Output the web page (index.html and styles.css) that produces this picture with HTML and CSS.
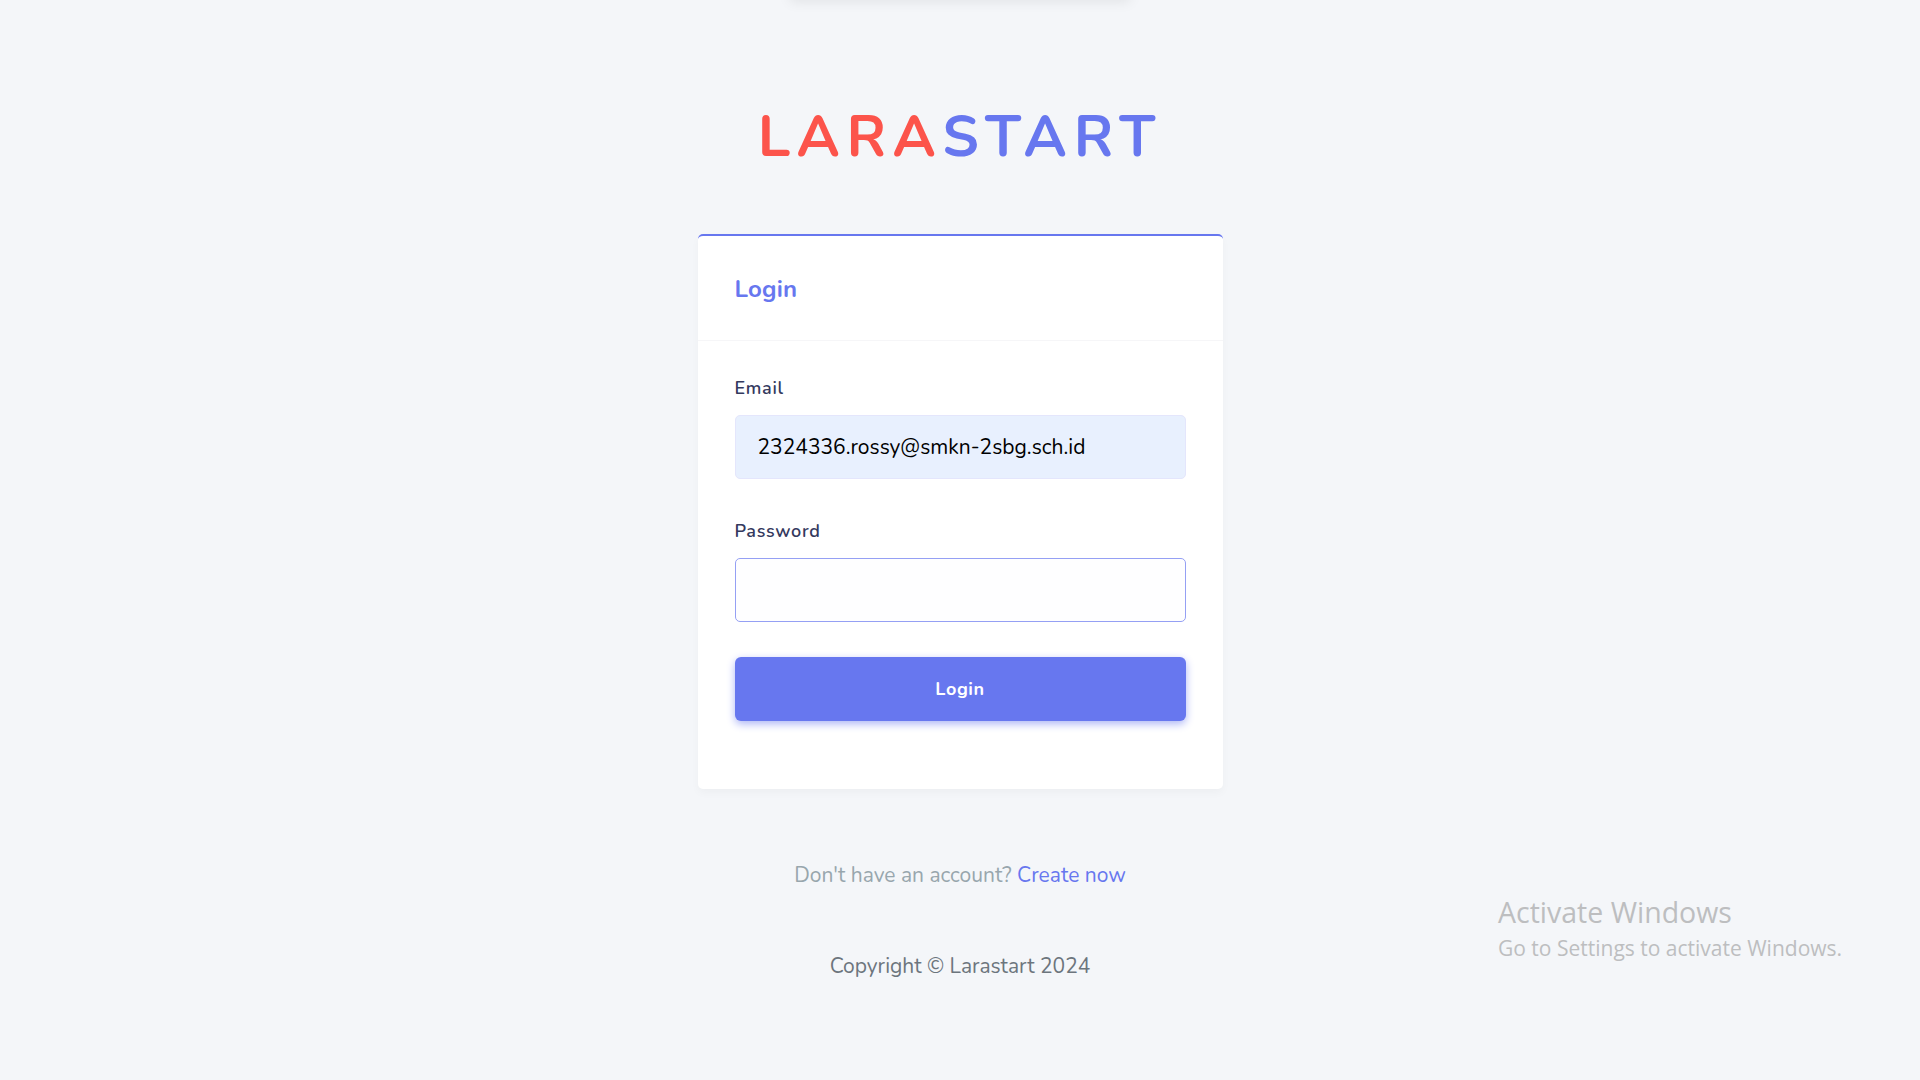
FILE: index.html
```html
<!DOCTYPE html>
<html lang="en">
<head>
<meta charset="utf-8">
<title>Login &mdash; Larastart</title>
<link rel="stylesheet" href="styles.css">
</head>
<body>
<div class="top-shadow"></div>
<main class="page">
  <div class="brand"><span class="brand-red">LARA</span><span class="brand-blue">START</span></div>
  <section class="card">
    <div class="card-header"><h4>Login</h4></div>
    <form class="card-body">
      <div class="form-group">
        <label class="label" for="email">Email</label>
        <input class="control control-filled" id="email" type="email" value="2324336.rossy@smkn-2sbg.sch.id">
      </div>
      <div class="form-group form-group-tight">
        <label class="label" for="password">Password</label>
        <input class="control control-focus" id="password" type="password">
      </div>
      <div class="form-group form-group-last">
        <button class="btn" type="button">Login</button>
      </div>
    </form>
  </section>
  <p class="signup">Don't have an account? <a href="#">Create now</a></p>
  <p class="copyright">Copyright &copy; Larastart 2024</p>
</main>
<div class="activate">
  <div class="activate-title">Activate Windows</div>
  <div class="activate-sub">Go to Settings to activate Windows.</div>
</div>
</body>
</html>
```
FILE: styles.css
```css
* { box-sizing: border-box; }
html, body { margin: 0; padding: 0; }
body {
  background: #f4f6f9;
  font-family: "Nunito", "Lato", "Open Sans", sans-serif;
  color: #6c757d;
  min-height: 1080px;
  overflow: hidden;
}
.top-shadow {
  position: absolute;
  top: -40px;
  left: 790px;
  width: 340px;
  height: 40px;
  background: #f4f6f9;
  box-shadow: 0 2px 12px rgba(0, 0, 0, 0.08);
}
.page {
  display: flex;
  flex-direction: column;
  align-items: center;
  padding-top: 106px;
}
.brand {
  font-size: 58px;
  line-height: 62px;
  height: 62px;
  letter-spacing: 7px;
  font-weight: 700;
  margin-bottom: 66px;
}
.brand-red { color: #fc544b; }
.brand-blue { color: #6777ef; }
.card {
  width: 525px;
  background: #fff;
  border-top: 2px solid #6777ef;
  border-radius: 5px;
  box-shadow: 0 4px 8px rgba(0, 0, 0, 0.03);
}
.card-header {
  min-height: 105px;
  padding: 22px 37px;
  border-bottom: 1px solid #f6f6f8;
  display: flex;
  align-items: center;
}
.card-header h4 {
  margin: 0;
  font-size: 24px;
  font-weight: 700;
  color: #6777ef;
  letter-spacing: 0.2px;
  position: relative;
  top: 1px;
}
.card-body {
  padding: 34px 37px 30px;
}
.form-group { margin-bottom: 39px; }
.form-group-tight { margin-bottom: 35px; }
.form-group-last { margin-bottom: 38px; }
.label {
  display: block;
  font-size: 18px;
  line-height: 27px;
  font-weight: 600;
  color: #34395e;
  letter-spacing: 0.7px;
  margin-bottom: 13px;
}
.control {
  display: block;
  width: 100%;
  height: 64px;
  padding: 0 22px;
  font-family: inherit;
  font-size: 21px;
  color: #000;
  border-radius: 5px;
  outline: none;
}
.control-filled {
  background: #e8f0fe;
  border: 1px solid #e4e6fc;
}
.control-focus {
  background: #fefeff;
  border: 1px solid #95a0f4;
}
.btn {
  display: block;
  width: 100%;
  height: 64px;
  border: 0;
  border-radius: 6px;
  background: #6777ef;
  color: #fff;
  font-family: inherit;
  font-size: 18px;
  font-weight: 700;
  letter-spacing: 0.6px;
  box-shadow: 0 3px 9px #acb5f6;
  cursor: pointer;
}
.signup {
  margin: 71px 0 0;
  font-size: 21px;
  line-height: 30px;
  color: #98a6ad;
}
.signup a { color: #6777ef; text-decoration: none; }
.copyright {
  margin: 61px 0 0;
  font-size: 21px;
  line-height: 30px;
  color: #6c757d;
}
.activate {
  position: absolute;
  left: 1498px;
  top: 894px;
  font-family: "Open Sans", "Noto Sans", sans-serif;
  color: #bdbec0;
}
.activate-title {
  font-size: 28.5px;
  line-height: 36px;
}
.activate-sub {
  font-size: 21px;
  line-height: 30px;
  padding-top: 3px;
}
```
